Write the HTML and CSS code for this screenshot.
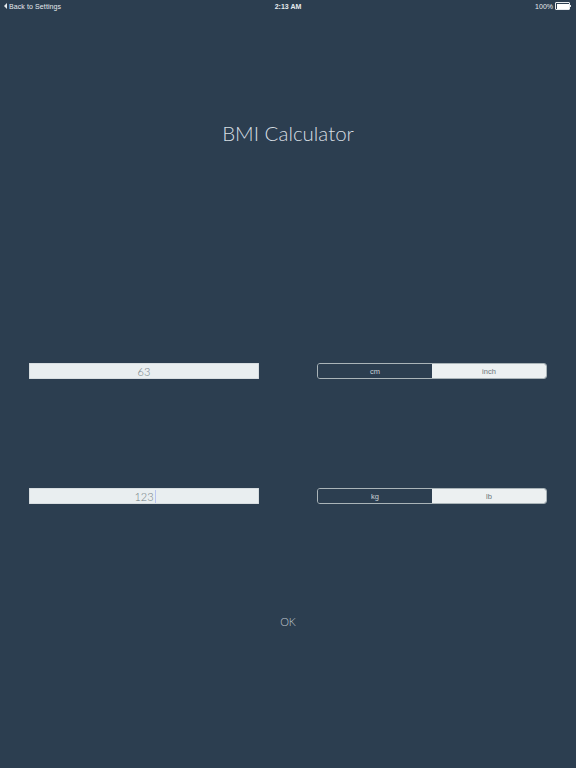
FILE: index.html
```html
<!DOCTYPE html>
<html>
<head>
<meta charset="utf-8">
<link rel="stylesheet" href="styles.css">
</head>
<body>
<div class="page">
  <div class="status">
    <div class="status-left"><span class="back-arrow"></span>Back to Settings</div>
    <div class="status-mid">2:13 AM</div>
    <div class="status-right">100%<span class="battery"><span class="battery-fill"></span></span></div>
  </div>
  <h1 class="title">BMI Calculator</h1>
  <div class="row row-height">
    <div class="field"><span class="value">63</span></div>
    <div class="segment">
      <div class="seg seg-on">cm</div>
      <div class="seg seg-off">inch</div>
    </div>
  </div>
  <div class="row row-weight">
    <div class="field"><span class="value caret">123</span></div>
    <div class="segment">
      <div class="seg seg-on">kg</div>
      <div class="seg seg-off">lb</div>
    </div>
  </div>
  <div class="ok">OK</div>
</div>
</body>
</html>
```
FILE: styles.css
```css
html, body {
  margin: 0;
  padding: 0;
  background: #2c3e50;
}
.page {
  width: 576px;
  height: 768px;
  background: #2c3e50;
  display: flex;
  flex-direction: column;
  font-family: "Liberation Sans", Arial, sans-serif;
}
.status {
  height: 12px;
  display: grid;
  grid-template-columns: 1fr auto 1fr;
  align-items: center;
  color: #e6eaee;
  font-size: 7px;
  padding: 0 4px 0 4px;
}
.status-left {
  display: flex;
  align-items: center;
  letter-spacing: 0.1px;
}
.back-arrow {
  width: 0;
  height: 0;
  border-top: 3px solid transparent;
  border-bottom: 3px solid transparent;
  border-right: 3px solid #e6eaee;
  margin-right: 2px;
}
.status-mid {
  text-align: center;
  font-weight: bold;
}
.status-right {
  display: flex;
  justify-content: flex-end;
  align-items: center;
  gap: 2px;
}
.battery {
  width: 12px;
  height: 5px;
  border: 0.5px solid #e6eaee;
  border-radius: 1px;
  display: flex;
  padding: 0.5px;
  position: relative;
  margin-right: 2px;
}
.battery::after {
  content: "";
  position: absolute;
  right: -2px;
  top: 1.5px;
  width: 1px;
  height: 2px;
  background: #e6eaee;
}
.battery-fill {
  flex: 1;
  background: #ffffff;
}
.title {
  margin: 109px 0 0 0;
  text-align: center;
  font-family: Lato, "Open Sans", sans-serif;
  font-weight: 300;
  font-size: 20.5px;
  line-height: 24px;
  color: #d6dde2;
}
.row {
  display: grid;
  grid-template-columns: 1fr 1fr;
  column-gap: 58px;
  padding: 0 29px;
  height: 16px;
}
.row-height {
  margin-top: 218px;
}
.row-weight {
  margin-top: 109px;
}
.field {
  background: #e9eef0;
  display: flex;
  justify-content: center;
  align-items: center;
  font-family: Lato, "Open Sans", sans-serif;
  font-weight: 300;
  font-size: 11px;
  color: #6e7b81;
  box-shadow: inset 0 0 0 0.5px #c5ccd0;
}
.value.caret {
  border-right: 1px solid #b8c4f0;
  padding-right: 1px;
  margin-left: 2px;
}
.segment {
  display: grid;
  grid-template-columns: 1fr 1fr;
  border: 1px solid #aab4b8;
  border-radius: 3px;
  overflow: hidden;
  font-size: 7.5px;
}
.seg {
  display: flex;
  align-items: center;
  justify-content: center;
}
.seg-on {
  background: #2c3e50;
  color: #c9d1d6;
}
.seg-off {
  background: #ecf0f1;
  color: #6a757b;
}
.ok {
  margin-top: 111px;
  text-align: center;
  font-family: Lato, "Open Sans", sans-serif;
  font-weight: 300;
  font-size: 11px;
  line-height: 14px;
  color: #c0c9cf;
}
```
